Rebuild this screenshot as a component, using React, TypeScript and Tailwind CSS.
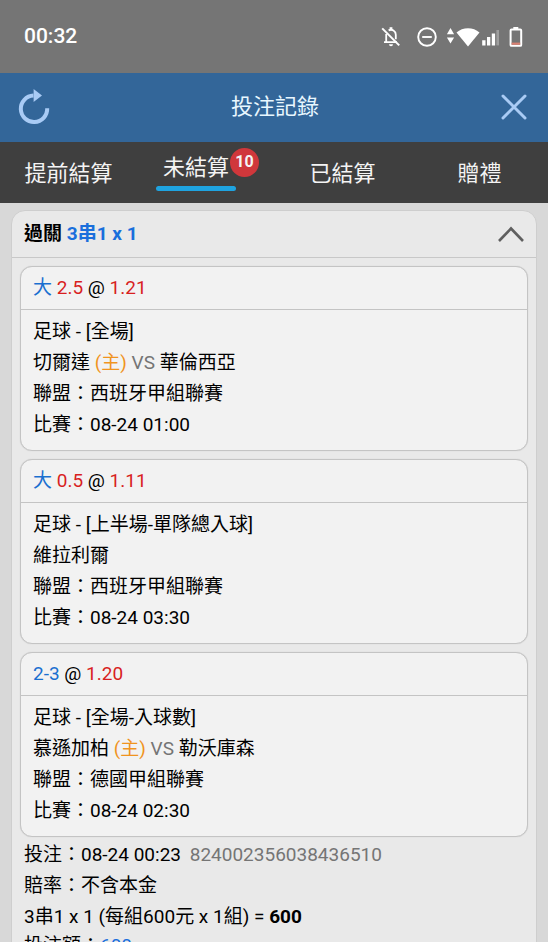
import { useState } from "react";

type Bet = {
  pick: string;
  line?: string;
  odds: string;
  market: string;
  home: string;
  away?: string;
  league: string;
  time: string;
};

const bets: Bet[] = [
  {
    pick: "大",
    line: "2.5",
    odds: "1.21",
    market: "足球 - [全場]",
    home: "切爾達",
    away: "華倫西亞",
    league: "西班牙甲組聯賽",
    time: "08-24 01:00",
  },
  {
    pick: "大",
    line: "0.5",
    odds: "1.11",
    market: "足球 - [上半場-單隊總入球]",
    home: "維拉利爾",
    league: "西班牙甲組聯賽",
    time: "08-24 03:30",
  },
  {
    pick: "2-3",
    odds: "1.20",
    market: "足球 - [全場-入球數]",
    home: "慕遜加柏",
    away: "勒沃庫森",
    league: "德國甲組聯賽",
    time: "08-24 02:30",
  },
];

const tabs = [
  { label: "提前結算" },
  { label: "未結算", count: 10 },
  { label: "已結算" },
  { label: "贈禮" },
];

const StatusBar = () => {
  return (
    <div className="flex h-[73px] shrink-0 items-center justify-between bg-[#757575] pl-6 pr-[25px] pt-px text-white">
      <span className="text-[21px] font-medium">00:32</span>
      <div className="flex items-center">
        <svg className="mr-4" width="20" height="22" viewBox="0 0 20 22" fill="none" stroke="currentColor" strokeWidth="1.8">
          <path d="M5.2 8v7.2M3 16.2h13M7.6 4.4C11 2.6 14.8 5 14.8 8.8v4.4" />
          <path d="M10 1.2v2.4" strokeWidth="2.8" />
          <path d="M8 18.2h4a2 2 0 0 1-4 0z" fill="currentColor" stroke="none" />
          <path d="M1.2 2.4l17 17" strokeWidth="2" />
        </svg>
        <svg className="mr-2" width="20" height="20" viewBox="0 0 20 20" fill="none" stroke="currentColor" strokeWidth="1.9">
          <circle cx="10" cy="10" r="8.8" />
          <path d="M5.2 10h9.6" />
        </svg>
        <svg width="56" height="20" viewBox="-1 0 56 20" fill="currentColor">
          <path d="M4.5 1l3.6 6.2H.9zM4.5 16.6l3.6-6.2H.9z" />
          <path d="M22 19.5L10.5 5.4C16.7-.3 27.3-.3 33.5 5.4z" />
          <path d="M36.2 13.2h3.3V18.4h-3.3zM41 10h3.3v8.4H41zM45.8 6.6h3.3v11.8h-3.3z" />
          <path d="M50.4 3H53v15.4h-2.6z" opacity="0.3" />
        </svg>
        <svg className="ml-2" width="14" height="20" viewBox="0 0 14 20" fill="none">
          <path d="M4.3 0h5v3h-5z" fill="white" />
          <rect x="1.6" y="2.6" width="10.6" height="16.2" rx="0.9" stroke="white" strokeWidth="2" />
          <path d="M2.6 15.6h8.6v2.2H2.6z" fill="#d98072" />
        </svg>
      </div>
    </div>
  );
};

const Header = () => {
  return (
    <header className="flex h-[69px] shrink-0 items-center justify-between bg-[#336699] pb-[2px] pl-[18px] pr-5 text-[#a9cbf5]">
      <button type="button" aria-label="重新整理">
        <svg width="32" height="36" viewBox="0 0 32 36" fill="none">
          <path d="M15.5 6.6A13.2 13.2 0 1 0 29.2 19.3" stroke="currentColor" strokeWidth="4" />
          <path d="M15.6 0L24 6.6 15.6 13z" fill="currentColor" />
        </svg>
      </button>
      <h1 className="text-[22px] text-[#e8f7ff]">投注記錄</h1>
      <button type="button" aria-label="關閉">
        <svg width="28" height="26" viewBox="0 0 28 26" fill="none" stroke="currentColor" strokeWidth="3" strokeLinecap="round">
          <path d="M3 2l22 22M25 2L3 24" />
        </svg>
      </button>
    </header>
  );
};

const BetCard = ({ bet }: { bet: Bet }) => {
  return (
    <article className="rounded-xl border border-[#c4c4c4] bg-[#f2f2f2] shadow-[0_0_1px_#c4c4c4]">
      <h3 className="border-b border-[#c4c4c4] px-3 pb-[6px] pt-[5px]">
        <span className="text-[#1a6fd0]">{bet.pick}</span>{" "}
        {bet.line && <span className="text-[#d81f1f]">{bet.line} </span>}
        @ <span className="text-[#d81f1f]">{bet.odds}</span>
      </h3>
      <div className="px-3 pb-[10px] pt-[6px]">
        <p>{bet.market}</p>
        <p>
          {bet.home}
          {bet.away && (
            <>
              {" "}
              <span className="text-[#f0941e]">(主)</span> <span className="text-[#757575]">VS</span> {bet.away}
            </>
          )}
        </p>
        <p>聯盟：{bet.league}</p>
        <p>比賽：{bet.time}</p>
      </div>
    </article>
  );
};

const App = () => {
  const [active, setActive] = useState("未結算");
  const [open, setOpen] = useState(true);

  return (
    <div lang="zh-Hant" className="flex h-screen flex-col bg-[#d8d8d8] font-[Roboto,'Noto_Sans_CJK_TC',sans-serif] text-black">
      <StatusBar />
      <Header />
      <nav className="grid h-[61px] shrink-0 grid-cols-4 bg-[#3f3f3f] text-[22px] text-[#f4f4f4]">
        {tabs.map((tab) => (
          <button
            key={tab.label}
            type="button"
            onClick={() => setActive(tab.label)}
            className={tab.count ? "flex items-center justify-center pl-1" : "flex items-center justify-center"}
          >
            <span className={active === tab.label ? "flex flex-col gap-px leading-[34px]" : "pt-[2px] leading-8"}>
              <span className={active === tab.label ? "px-[7px]" : ""}>{tab.label}</span>
              {active === tab.label && <span className="mb-[3px] h-[5px] rounded-full bg-[#1fa3e0]" />}
            </span>
            {tab.count && (
              <span className="-ml-[6px] mb-5 flex size-[29px] items-center justify-center rounded-full bg-[#d0373b] pb-px text-base font-bold">
                {tab.count}
              </span>
            )}
          </button>
        ))}
      </nav>

      <main className="min-h-0 flex-1 overflow-y-auto px-[11px] pt-[7px] [scrollbar-width:none]">
        <section className="rounded-[14px] border border-[#cecece] bg-[#e9e9e9] text-[19px] leading-[31px]">
          <button
            type="button"
            aria-expanded={open}
            onClick={() => setOpen(!open)}
            className="flex h-[47px] w-full items-center justify-between border-b border-[#c8c8c8] pb-px pl-3 pr-[11px] font-bold"
          >
            <span>
              過關 <span className="text-[#1a6fdc]">3串1 x 1</span>
            </span>
            <svg width="28" height="18" viewBox="0 0 28 18" fill="none" stroke="#5f5f5f" strokeWidth="2.6">
              <path d="M2 16L14 3.5 26 16" />
            </svg>
          </button>
          {open && (
            <>
              <div className="flex flex-col gap-2 px-2 pt-2">
                {bets.map((bet) => (
                  <BetCard key={bet.time} bet={bet} />
                ))}
              </div>
              <div className="px-3 pb-3 pt-[2px]">
                <p>
                  投注：08-24 00:23 <span className="ml-1 text-[#757575]">824002356038436510</span>
                </p>
                <p>賠率：不含本金</p>
                <p>
                  3串1 x 1 (每組600元 x 1組) = <b>600</b>
                </p>
                <p className="leading-7">
                  投注額：<span className="text-[#1a6fdc]">600</span>
                </p>
              </div>
            </>
          )}
        </section>
      </main>
    </div>
  );
};

export default App;
